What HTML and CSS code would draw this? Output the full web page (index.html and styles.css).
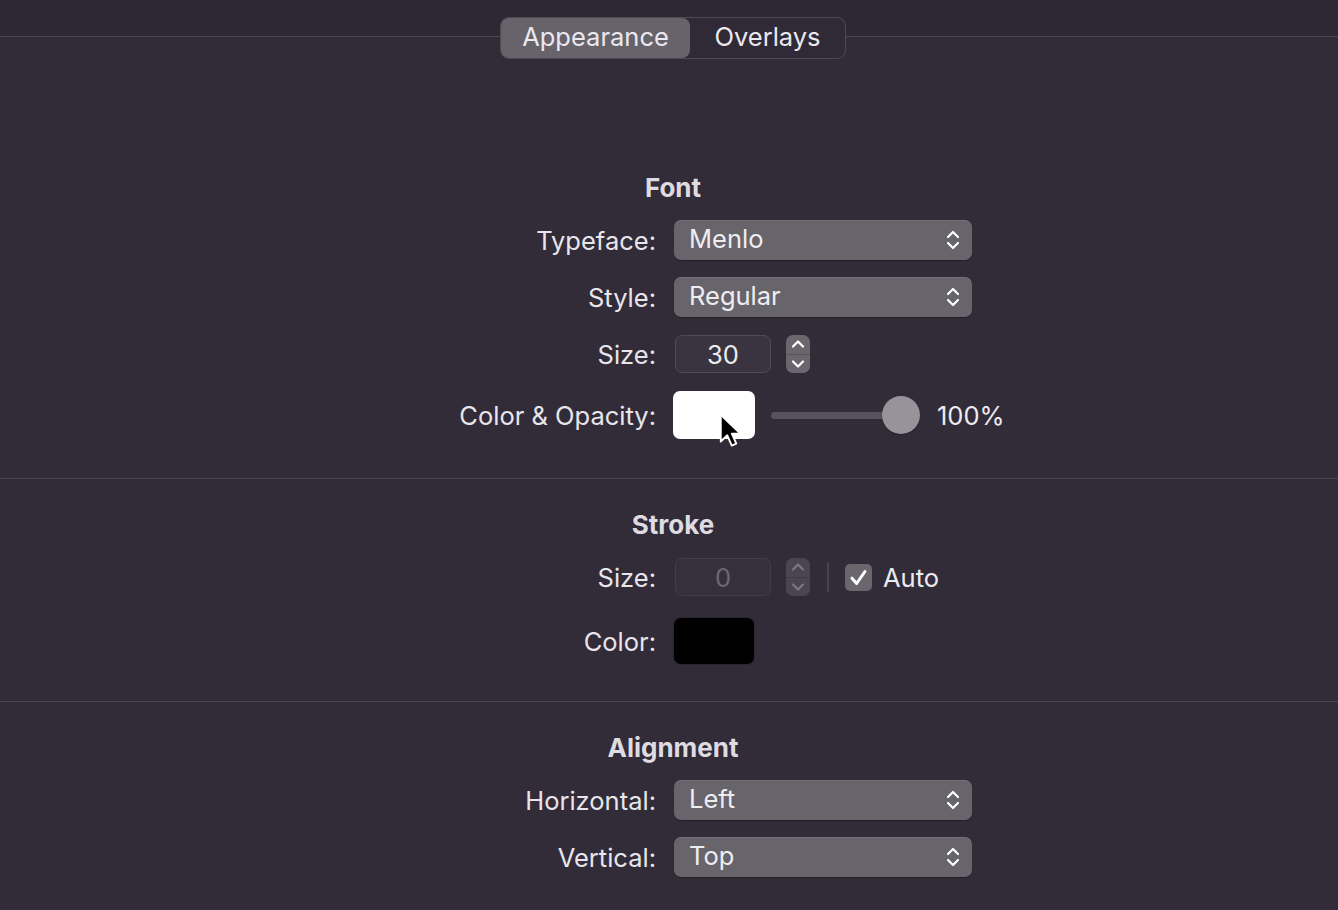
FILE: index.html
```html
<!DOCTYPE html>
<html>
<head>
<meta charset="utf-8">
<link rel="stylesheet" href="styles.css">
</head>
<body>
<div class="window">
  <div class="toolbar">
    <div class="segmented">
      <div class="seg seg-active">Appearance</div>
      <div class="seg">Overlays</div>
    </div>
  </div>

  <section class="section section-font">
    <h2 class="heading">Font</h2>
    <div class="row">
      <div class="label">Typeface:</div>
      <div class="ctrl">
        <div class="popup"><span>Menlo</span>
          <svg class="chev" width="14" height="22" viewBox="0 0 14 22"><path d="M2 8 L7 3 L12 8 M2 14 L7 19 L12 14" fill="none" stroke="#fff" stroke-width="2.2" stroke-linecap="round" stroke-linejoin="round"/></svg>
        </div>
      </div>
    </div>
    <div class="row">
      <div class="label">Style:</div>
      <div class="ctrl">
        <div class="popup"><span>Regular</span>
          <svg class="chev" width="14" height="22" viewBox="0 0 14 22"><path d="M2 8 L7 3 L12 8 M2 14 L7 19 L12 14" fill="none" stroke="#fff" stroke-width="2.2" stroke-linecap="round" stroke-linejoin="round"/></svg>
        </div>
      </div>
    </div>
    <div class="row">
      <div class="label">Size:</div>
      <div class="ctrl">
        <div class="field">30</div>
        <div class="stepper">
          <div class="step"><svg width="16" height="10" viewBox="0 0 16 10"><path d="M3 7.5 L8 2.5 L13 7.5" fill="none" stroke="#fff" stroke-width="2.2" stroke-linecap="round" stroke-linejoin="round"/></svg></div>
          <div class="step step-down"><svg width="16" height="10" viewBox="0 0 16 10"><path d="M3 2.5 L8 7.5 L13 2.5" fill="none" stroke="#fff" stroke-width="2.2" stroke-linecap="round" stroke-linejoin="round"/></svg></div>
        </div>
      </div>
    </div>
    <div class="row row-color">
      <div class="label">Color &amp; Opacity:</div>
      <div class="ctrl">
        <div class="swatch swatch-white">
          <svg class="cursor" width="26" height="38" viewBox="0 0 22 32"><path d="M1.5 1.5 L1.5 24 L7 18.8 L10.8 27.5 L14.6 25.9 L10.9 17.4 L18 17.4 Z" fill="#000" stroke="#fff" stroke-width="1.6" stroke-linejoin="round"/></svg>
        </div>
        <div class="slider">
          <div class="track"></div>
          <div class="knob"></div>
        </div>
        <div class="pct">100%</div>
      </div>
    </div>
  </section>

  <section class="section section-stroke">
    <h2 class="heading">Stroke</h2>
    <div class="row">
      <div class="label">Size:</div>
      <div class="ctrl">
        <div class="field field-disabled">0</div>
        <div class="stepper stepper-disabled">
          <div class="step"><svg width="16" height="10" viewBox="0 0 16 10"><path d="M3 7.5 L8 2.5 L13 7.5" fill="none" stroke="#7b7680" stroke-width="2.2" stroke-linecap="round" stroke-linejoin="round"/></svg></div>
          <div class="step step-down"><svg width="16" height="10" viewBox="0 0 16 10"><path d="M3 2.5 L8 7.5 L13 2.5" fill="none" stroke="#7b7680" stroke-width="2.2" stroke-linecap="round" stroke-linejoin="round"/></svg></div>
        </div>
        <div class="vsep"></div>
        <div class="checkbox"><svg width="27" height="27" viewBox="0 0 27 27"><path d="M7 14.2 L11.6 19.5 L20 7.5" fill="none" stroke="#fff" stroke-width="3" stroke-linecap="round" stroke-linejoin="round"/></svg></div>
        <div class="check-label">Auto</div>
      </div>
    </div>
    <div class="row row-stroke-color">
      <div class="label">Color:</div>
      <div class="ctrl">
        <div class="swatch swatch-black"></div>
      </div>
    </div>
  </section>

  <section class="section section-align">
    <h2 class="heading">Alignment</h2>
    <div class="row">
      <div class="label">Horizontal:</div>
      <div class="ctrl">
        <div class="popup"><span>Left</span>
          <svg class="chev" width="14" height="22" viewBox="0 0 14 22"><path d="M2 8 L7 3 L12 8 M2 14 L7 19 L12 14" fill="none" stroke="#fff" stroke-width="2.2" stroke-linecap="round" stroke-linejoin="round"/></svg>
        </div>
      </div>
    </div>
    <div class="row">
      <div class="label">Vertical:</div>
      <div class="ctrl">
        <div class="popup"><span>Top</span>
          <svg class="chev" width="14" height="22" viewBox="0 0 14 22"><path d="M2 8 L7 3 L12 8 M2 14 L7 19 L12 14" fill="none" stroke="#fff" stroke-width="2.2" stroke-linecap="round" stroke-linejoin="round"/></svg>
        </div>
      </div>
    </div>
  </section>
</div>
</body>
</html>
```

FILE: styles.css
```css
html, body {
  margin: 0;
  padding: 0;
  background: #322c39;
}
body {
  font-family: "Inter", "Noto Sans", sans-serif;
  font-size: 25.5px;
  color: #e8e5eb;
  width: 1338px;
  height: 910px;
  overflow: hidden;
}
.window {
  display: flex;
  flex-direction: column;
}
.toolbar {
  background: #2d2834;
  border-bottom: 1px solid #4b4652;
  display: flex;
  justify-content: center;
  align-items: flex-start;
  padding-top: 17px;
  padding-left: 8px;
  height: 19px;
}
.segmented {
  display: flex;
  height: 40px;
  width: 344px;
  border: 1px solid #4e4955;
  border-radius: 9px;
  background: #2f2a36;
  position: relative;
  z-index: 1;
}
.seg {
  display: flex;
  align-items: center;
  justify-content: center;
  color: #ebe8ee;
  font-size: 25.5px;
  flex: 1;
  padding-bottom: 3px;
}
.seg-active {
  flex: 0 0 189px;
  background: #67636b;
  border-radius: 8px;
}
.section {
  display: flex;
  flex-direction: column;
  gap: 17px;
  border-bottom: 1px solid #4b4652;
}
.section-font {
  padding-top: 136px;
  padding-bottom: 39px;
}
.section-stroke {
  padding-top: 31px;
  padding-bottom: 37px;
}
.section-align {
  padding-top: 31px;
  border-bottom: none;
}
.heading {
  margin: 0;
  height: 30px;
  line-height: 30px;
  font-size: 26px;
  font-weight: 700;
  color: #dedbe1;
  text-align: center;
  padding-left: 8px;
}
.row {
  display: grid;
  grid-template-columns: 1fr 1fr;
  column-gap: 18px;
  align-items: center;
  min-height: 40px;
  padding-right: 8px;
}
.row-stroke-color {
  margin-top: 4px;
}
.label {
  justify-self: end;
}
.ctrl {
  display: flex;
  align-items: center;
}
.popup {
  width: 298px;
  height: 40px;
  box-sizing: border-box;
  background: #67646b;
  border-radius: 7px;
  box-shadow: 0 1px 1px rgba(0,0,0,0.3), inset 0 1px 0 rgba(255,255,255,0.08);
  display: flex;
  align-items: center;
  justify-content: space-between;
  padding: 0 12px 0 15px;
  color: #eeedf0;
}
.popup span {
  margin-top: -4px;
}
.field {
  width: 96px;
  height: 38px;
  box-sizing: border-box;
  border: 1px solid #4f4a56;
  background: #3a3440;
  border-radius: 7px;
  display: flex;
  align-items: center;
  justify-content: center;
  margin-left: 1px;
  color: #ecebef;
}
.field-disabled {
  background: #35303c;
  border-color: #423d48;
  color: #6c6771;
}
.stepper {
  margin-left: 15px;
  width: 24px;
  height: 38px;
  border-radius: 7px;
  background: #6a666e;
  display: flex;
  flex-direction: column;
  overflow: hidden;
}
.step {
  flex: 1;
  display: flex;
  align-items: center;
  justify-content: center;
}
.step-down {
  border-top: 1px solid #57535c;
}
.stepper-disabled {
  background: #4a4550;
}
.stepper-disabled .step-down {
  border-top-color: #3f3a45;
}
.vsep {
  width: 2px;
  height: 30px;
  background: #47424d;
  margin-left: 17px;
}
.checkbox {
  margin-left: 16px;
  width: 27px;
  height: 27px;
  border-radius: 5px;
  background: #6a666e;
  display: flex;
}
.check-label {
  margin-left: 11px;
  color: #ecebef;
}
.swatch {
  border-radius: 7px;
  position: relative;
}
.swatch-white {
  width: 82px;
  height: 48px;
  background: #ffffff;
  margin-left: -1px;
}
.swatch-black {
  width: 80px;
  height: 46px;
  background: #000000;
  box-shadow: 0 0 0 1px #2a2530;
}
.cursor {
  position: absolute;
  left: 46px;
  top: 22px;
}
.slider {
  margin-left: 16px;
  width: 149px;
  height: 38px;
  display: flex;
  align-items: center;
}
.track {
  width: 130px;
  height: 7px;
  border-radius: 4px;
  background: #57525e;
}
.knob {
  width: 38px;
  height: 38px;
  border-radius: 50%;
  background: #96939b;
  margin-left: -19px;
  box-shadow: 0 1px 2px rgba(0,0,0,0.3);
}
.pct {
  margin-left: 17px;
  color: #ecebef;
}
```
